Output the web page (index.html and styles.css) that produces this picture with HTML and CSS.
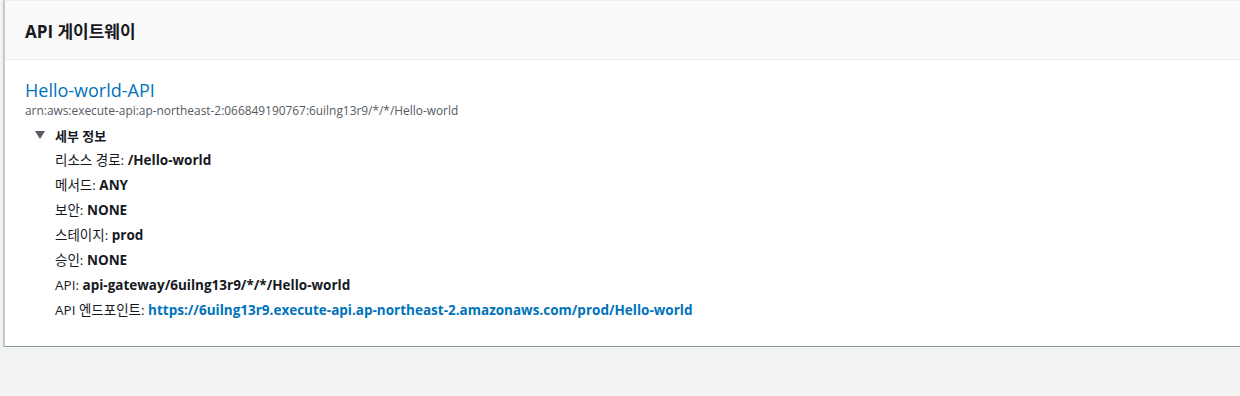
FILE: index.html
```html
<!DOCTYPE html>
<html lang="ko">
<head>
    <meta charset="UTF-8">
    <meta name="viewport" content="width=device-width, initial-scale=1.0">
    <title>API 게이트웨이</title>
    <link rel="stylesheet" href="styles.css">
</head>
<body>
    <div class="panel">
        <div class="panel-header">
            <h2>API 게이트웨이</h2>
        </div>

        <div class="panel-body">
            <a class="api-name" href="#">Hello-world-API</a>
            <div class="api-arn">arn:aws:execute-api:ap-northeast-2:066849190767:6uilng13r9/*/*/Hello-world</div>

            <div class="details">
                <div class="details-toggle">
                    <span class="caret"></span>
                    <span>세부 정보</span>
                </div>
                <ul class="details-list">
                    <li>리소스 경로: <b>/Hello-world</b></li>
                    <li>메서드: <b>ANY</b></li>
                    <li>보안: <b>NONE</b></li>
                    <li>스테이지: <b>prod</b></li>
                    <li>승인: <b>NONE</b></li>
                    <li>API: <b>api-gateway/6uilng13r9/*/*/Hello-world</b></li>
                    <li>API 엔드포인트: <a class="endpoint" href="#">https://6uilng13r9.execute-api.ap-northeast-2.amazonaws.com/prod/Hello-world</a></li>
                </ul>
            </div>
        </div>
    </div>
</body>
</html>
```

FILE: styles.css
```css
body {
    font-family: "Open Sans", "Noto Sans CJK KR", sans-serif;
    margin: 0;
    background: #f2f3f3;
    color: #16191f;
}

.panel {
    margin-left: 4px;
    margin-right: -20px;
    background: white;
    border-left: 1px solid #c6cccc;
    border-top: 1px solid #eaeded;
    border-bottom: 1px solid #8d999a;
    box-shadow: 0 1px 1px 0 rgba(0, 28, 36, 0.3), -1px 0 1px 0 rgba(0, 28, 36, 0.15);
}

.panel-header {
    background: #fafafa;
    border-bottom: 1px solid #eaeded;
    height: 58px;
    display: flex;
    align-items: center;
    padding-left: 20px;
}

.panel-header h2 {
    margin: 0;
    font-size: 17px;
    font-weight: bold;
    color: #16191f;
}

.panel-body {
    padding: 18px 20px 23px 20px;
}

.api-name {
    display: block;
    font-size: 18px;
    line-height: 24px;
    color: #0073bb;
    text-decoration: none;
}

.api-arn {
    font-size: 11.9px;
    line-height: 16px;
    color: #545b64;
}

.details {
    margin-top: 7px;
}

.details-toggle {
    display: flex;
    align-items: center;
    font-size: 13px;
    font-weight: bold;
    height: 20px;
    padding-left: 10px;
}

.caret {
    width: 0;
    height: 0;
    border-left: 5px solid transparent;
    border-right: 5px solid transparent;
    border-top: 8px solid #545b64;
    margin-right: 10px;
}

.details-list {
    list-style: none;
    margin: 3px 0 0 0;
    padding: 0 0 0 30px;
}

.details-list li {
    font-size: 13.5px;
    line-height: 25px;
}

.details-list b {
    font-weight: bold;
}

.endpoint {
    color: #0073bb;
    font-weight: bold;
    text-decoration: none;
}
```
